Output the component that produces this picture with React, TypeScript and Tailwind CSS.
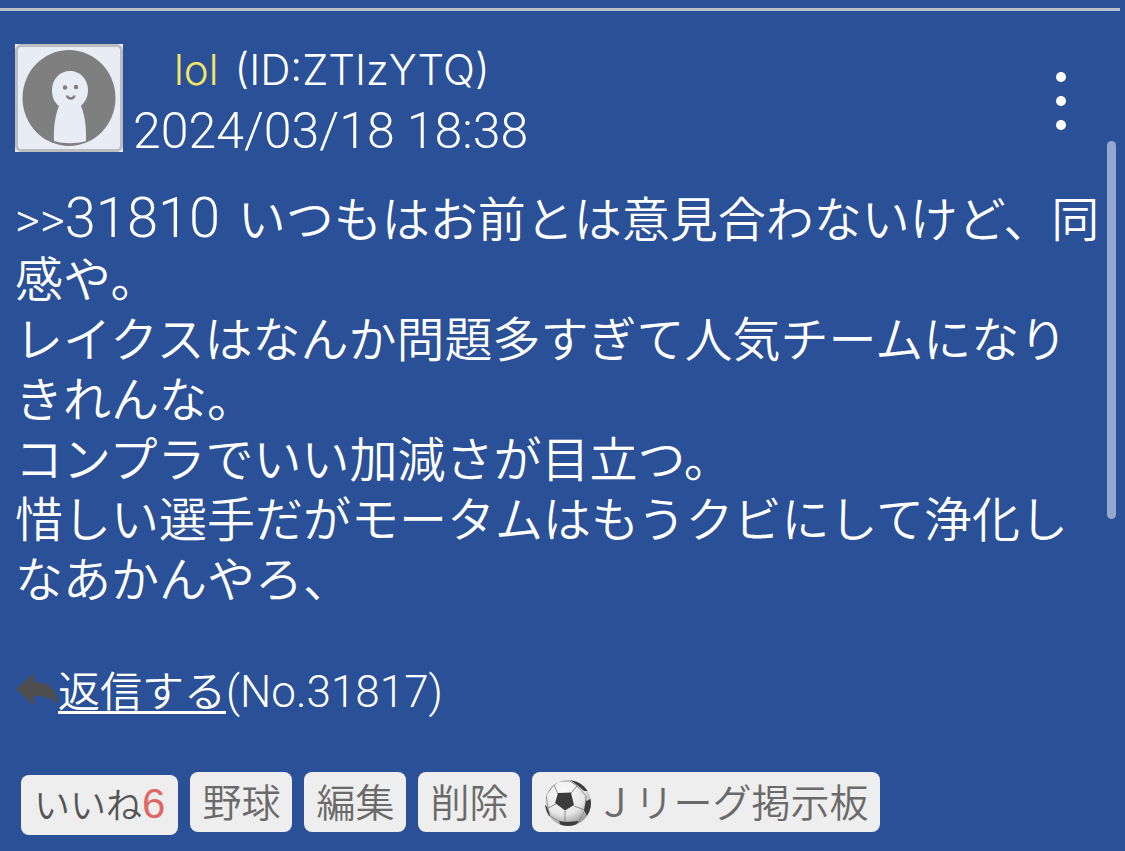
import React from 'react';

interface Tag {
    label: string;
    icon?: React.ReactNode;
}

const lines = [
    'レイクスはなんか問題多すぎて人気チームになりきれんな。',
    'コンプラでいい加減さが目立つ。',
    '惜しい選手だがモータムはもうクビにして浄化しなあかんやろ、',
];

const Avatar = () => (
    <svg viewBox="0 0 108 108" className="h-[108px] w-[108px] shrink-0" role="img" aria-label="avatar">
        <rect width="108" height="108" fill="#e8edf5" />
        <rect x="1.5" y="1.5" width="105" height="105" rx="5" fill="#e8edf5" stroke="#bdbdc0" strokeWidth="3" />
        <ellipse cx="54" cy="54" rx="46.5" ry="48" fill="#7f7f7f" />
        <path
            d="M55 27C45 27 37 35 37 46C37 53 39 58 44 62C40 72 38.500 83 39 97C48 100 62 100 71 97C71.500 83 70 72 66 62C71 57 73 52 73 46C73 35 65 27 55 27Z"
            fill="#e8edf5"
        />
        <circle cx="50" cy="43.500" r="2.200" fill="#7f7f7f" />
        <circle cx="61" cy="43" r="2.200" fill="#7f7f7f" />
        <path d="M52 51.500C53 55.500 58.500 55.500 59.500 51.500" fill="none" stroke="#7f7f7f" strokeWidth="2.5" />
    </svg>
);

const ReplyArrow = () => (
    <svg viewBox="0 0 43 36" className="h-9 w-[43px] self-center" aria-hidden="true">
        <path d="M1 18L19 2V11C32 11 42 17 43 33C37 27 30 25 19 25V35Z" fill="#4d4d4d" />
    </svg>
);

const SoccerBall = () => (
    <svg viewBox="0 0 48 48" className="mt-1 h-12 w-12" aria-hidden="true">
        <defs>
            <radialGradient id="ball" cx="0.4" cy="0.3" r="0.75">
                <stop offset="0" stopColor="#ffffff" />
                <stop offset="0.6" stopColor="#e6e6e6" />
                <stop offset="1" stopColor="#8c8c8c" />
            </radialGradient>
            <clipPath id="ballClip">
                <circle cx="24" cy="25" r="23" />
            </clipPath>
        </defs>
        <circle cx="24" cy="25" r="23" fill="url(#ball)" />
        <g clipPath="url(#ballClip)">
            <path
                d="M14 16L10 7M27 15L33 8M30 28L41 32M21 33V44M12 26L4 30M10 7L15 3L26 3L33 8L42 18L41 32L35 43M15 43L6 38L4 30L2 17L10 7"
                fill="none"
                stroke="#8a8a8a"
                strokeWidth="1"
            />
            <g fill="#3d3d3d">
                <path d="M14 15L27 14.500L30 27L21 32.500L11 25Z" />
                <path d="M26 2L37 3L45 13L40 13L33 7Z" />
                <path d="M17 1L10 6L4 13L2 13L7 3Z" />
                <path d="M47 21L42 23L40 32L43 38L47 33Z" />
                <path d="M15 43L22 44L35 43L30 49H17Z" />
                <path d="M0 25L3 29L6 38L0 37Z" />
            </g>
        </g>
    </svg>
);

const tags: Tag[] = [
    { label: '野球' },
    { label: '編集' },
    { label: '削除' },
    { label: 'Ｊリーグ掲示板', icon: <SoccerBall /> },
];

const TagButton = ({ tag }: { tag: Tag }) => (
    <button type="button" className="flex h-15 items-center gap-[3px] rounded-lg bg-[#eeeeee] px-3 pb-1 text-[39px] text-[#6a6a6a]">
        {tag.icon}
        <span>{tag.label}</span>
    </button>
);

const App = () => {
    return (
        <main className="relative min-h-screen bg-[#2a5098] pt-2 font-['Noto_Sans_CJK_JP',sans-serif] font-[350] text-white">
            <hr className="mr-[5px] border-0 border-t-3 border-[#b9bec9]" />

            <article className="px-[15px] pt-[33px]">
                {/* Poster */}
                <header className="flex items-start">
                    <Avatar />
                    <div className="ml-[10px] grow leading-[60px]">
                        <p className="-mt-1 pl-[41px] font-['Inter','Noto_Sans_CJK_JP',sans-serif] text-[42px] font-[350]">
                            <span className="text-[#f5e663]">lol</span>
                            <span className="ml-4">(ID:ZTIzYTQ)</span>
                        </p>
                        <time dateTime="2024-03-18T18:38" className="mt-px block font-['Roboto',sans-serif] text-[50px] font-[350]">
                            2024/03/18 18:38
                        </time>
                    </div>
                    <button type="button" aria-label="メニュー" className="mt-7 mr-11 flex flex-col gap-[14px]">
                        <span className="h-[10px] w-[10px] rounded-full bg-white" />
                        <span className="h-[10px] w-[10px] rounded-full bg-white" />
                        <span className="h-[10px] w-[10px] rounded-full bg-white" />
                    </button>
                </header>

                {/* Message */}
                <div className="-mr-[15px] mt-[25px] text-[48px] leading-[60px]">
                    <p>
                        <span className="mr-1 font-['Roboto',sans-serif] leading-none font-[350]">
                            &gt;&gt;<span className="text-[56px] leading-none">31810 </span>
                        </span>
                        いつもはお前とは意見合わないけど、同感や。
                    </p>
                    {lines.map((line) => (
                        <p key={line} className="pr-[15px]">{line}</p>
                    ))}
                </div>

                <div className="mt-[53px] flex items-baseline text-[42px] leading-[60px]">
                    <ReplyArrow />
                    <a href="#reply" className="underline decoration-3 underline-offset-4">返信する</a>
                    <span className="font-['Roboto',sans-serif] text-[44px] leading-none font-[350]">(No.31817)</span>
                </div>

                {/* Reactions and tags */}
                <div className="mt-[53px] flex flex-wrap items-start gap-3 pb-4 pl-[6px]">
                    <button type="button" className="mt-[3px] flex h-15 items-center rounded-lg bg-[#eeeeee] px-[13px] pb-1 text-[36px] text-[#555555]">
                        いいね<span className="font-['Liberation_Sans',sans-serif] text-[42px] text-[#e06666]">6</span>
                    </button>
                    {tags.map((tag) => (
                        <TagButton key={tag.label} tag={tag} />
                    ))}
                </div>
            </article>

            <div className="absolute top-[141px] right-[9px] h-[378px] w-[9px] rounded-full bg-[#95a8cc]" />
        </main>
    );
};

export default App;
